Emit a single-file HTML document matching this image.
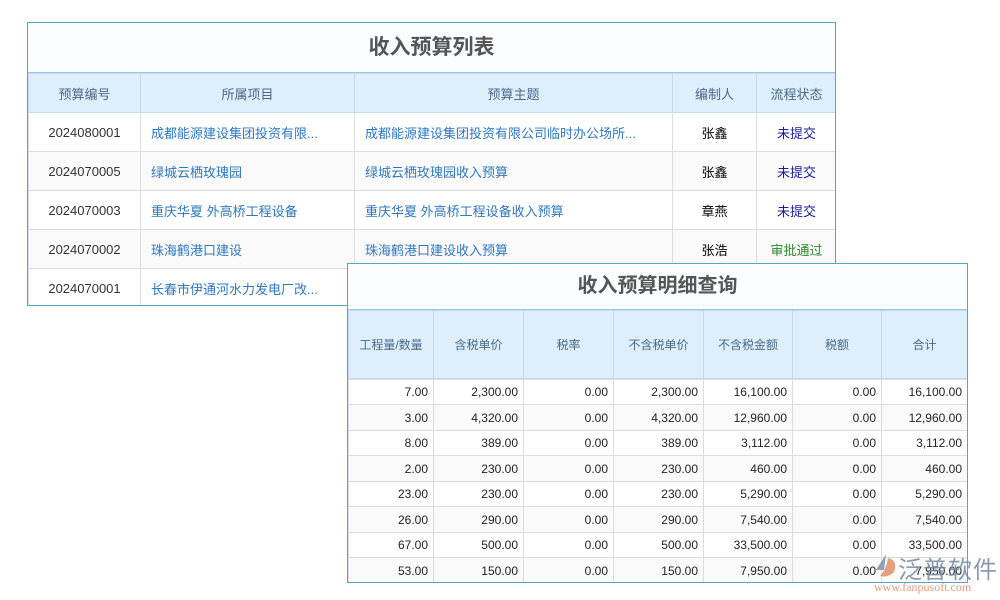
<!DOCTYPE html><html><head><meta charset="utf-8"><style>
body{margin:0;width:1000px;height:600px;background:#fff;position:relative;overflow:hidden;font-family:"Liberation Sans","Noto Sans CJK SC",sans-serif}
.t{position:absolute;border:1px solid #4fa8c8;background:#fff}
table{border-collapse:collapse;width:100%;table-layout:fixed}
td{border:1px solid #dcdcdc;font-size:13px;white-space:nowrap;overflow:hidden;padding:0}
.h td{background:#deeefb;color:#4a6a8a;text-align:center;border-color:#c4dbee}
.title{text-align:center;font-weight:bold;color:#555;background:#fbfdfe}
#d td{font-size:12px;padding-right:5px}
</style></head><body>
<div class="t" style="left:27px;top:22px;width:807px;height:282px;overflow:hidden">
<div class="title" style="height:49px;line-height:49px;font-size:21px;border-bottom:1px solid #9cc8e0">收入预算列表</div>
<table>
<colgroup><col style="width:112px"><col style="width:214px"><col style="width:318px"><col style="width:84px"><col style="width:80px"></colgroup>
<tr class="h" style="height:39px"><td>预算编号</td><td>所属项目</td><td>预算主题</td><td>编制人</td><td>流程状态</td></tr>
<tr style="height:39px"><td style="text-align:center;color:#333">2024080001</td><td style="color:#2e78c0;padding-left:10px">成都能源建设集团投资有限...</td><td style="color:#2e78c0;padding-left:10px">成都能源建设集团投资有限公司临时办公场所...</td><td style="text-align:center">张鑫</td><td style="text-align:center;color:#1a1aa0">未提交</td></tr>
<tr style="height:39px;background:#fafafa"><td style="text-align:center;color:#333">2024070005</td><td style="color:#2e78c0;padding-left:10px">绿城云栖玫瑰园</td><td style="color:#2e78c0;padding-left:10px">绿城云栖玫瑰园收入预算</td><td style="text-align:center">张鑫</td><td style="text-align:center;color:#1a1aa0">未提交</td></tr>
<tr style="height:39px"><td style="text-align:center;color:#333">2024070003</td><td style="color:#2e78c0;padding-left:10px">重庆华夏 外高桥工程设备</td><td style="color:#2e78c0;padding-left:10px">重庆华夏 外高桥工程设备收入预算</td><td style="text-align:center">章燕</td><td style="text-align:center;color:#1a1aa0">未提交</td></tr>
<tr style="height:39px;background:#fafafa"><td style="text-align:center;color:#333">2024070002</td><td style="color:#2e78c0;padding-left:10px">珠海鹤港口建设</td><td style="color:#2e78c0;padding-left:10px">珠海鹤港口建设收入预算</td><td style="text-align:center">张浩</td><td style="text-align:center;color:#2a8a2a">审批通过</td></tr>
<tr style="height:39px"><td style="text-align:center;color:#333">2024070001</td><td style="color:#2e78c0;padding-left:10px">长春市伊通河水力发电厂改...</td><td></td><td></td><td></td></tr>
</table></div>
<div class="t" style="left:347px;top:263px;width:619px;height:318px;overflow:hidden">
<div class="title" style="height:45px;line-height:45px;font-size:20px;border-bottom:1px solid #9cc8e0">收入预算明细查询</div>
<table>
<colgroup><col style="width:85px"><col style="width:90px"><col style="width:90px"><col style="width:90px"><col style="width:89px"><col style="width:89px"><col style="width:86px"></colgroup>
<tr class="h" style="height:68px"><td style="font-size:12px">工程量/数量</td><td style="font-size:12px">含税单价</td><td style="font-size:12px">税率</td><td style="font-size:12px">不含税单价</td><td style="font-size:12px">不含税金额</td><td style="font-size:12px">税额</td><td style="font-size:12px">合计</td></tr>
</table>
<table id="d" style="text-align:right;color:#222">
<colgroup><col style="width:85px"><col style="width:90px"><col style="width:90px"><col style="width:90px"><col style="width:89px"><col style="width:89px"><col style="width:86px"></colgroup>
<tr style="height:25px"><td>7.00</td><td>2,300.00</td><td>0.00</td><td>2,300.00</td><td>16,100.00</td><td>0.00</td><td>16,100.00</td></tr>
<tr style="height:26px;background:#fafafa"><td>3.00</td><td>4,320.00</td><td>0.00</td><td>4,320.00</td><td>12,960.00</td><td>0.00</td><td>12,960.00</td></tr>
<tr style="height:25px"><td>8.00</td><td>389.00</td><td>0.00</td><td>389.00</td><td>3,112.00</td><td>0.00</td><td>3,112.00</td></tr>
<tr style="height:26px;background:#fafafa"><td>2.00</td><td>230.00</td><td>0.00</td><td>230.00</td><td>460.00</td><td>0.00</td><td>460.00</td></tr>
<tr style="height:25px"><td>23.00</td><td>230.00</td><td>0.00</td><td>230.00</td><td>5,290.00</td><td>0.00</td><td>5,290.00</td></tr>
<tr style="height:26px;background:#fafafa"><td>26.00</td><td>290.00</td><td>0.00</td><td>290.00</td><td>7,540.00</td><td>0.00</td><td>7,540.00</td></tr>
<tr style="height:25px"><td>67.00</td><td>500.00</td><td>0.00</td><td>500.00</td><td>33,500.00</td><td>0.00</td><td>33,500.00</td></tr>
<tr style="height:26px;background:#fafafa"><td>53.00</td><td>150.00</td><td>0.00</td><td>150.00</td><td>7,950.00</td><td>0.00</td><td>7,950.00</td></tr>
</table></div>
<div style="position:absolute;left:872px;top:552px;width:28px;height:28px">
<svg width="28" height="28" viewBox="0 0 28 28"><path d="M14 2 L4 18 L12 18 Z" fill="#7a8aa8" opacity=".8"/><path d="M16 6 Q26 8 22 20 Q16 26 8 24 Q14 18 16 6Z" fill="#e08a60" opacity=".8"/></svg></div>
<div style="position:absolute;left:898px;top:550px;font-size:24px;color:#7a8aa0;opacity:.85;letter-spacing:1px">泛普软件</div>
<div style="position:absolute;left:874px;top:580px;font-size:12px;color:#e08a60;font-family:'Liberation Serif',serif;opacity:.85">www.fanpusoft.com</div>
</body></html>
